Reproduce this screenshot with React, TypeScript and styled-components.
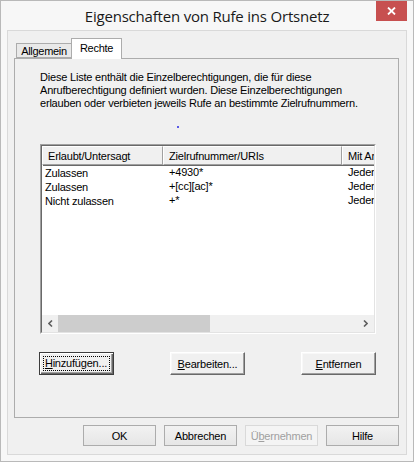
import styled, { createGlobalStyle } from "styled-components";

const GlobalStyle = createGlobalStyle`
  html, body {
    margin: 0;
    padding: 0;
    background: #ffffff;
  }
  * {
    box-sizing: border-box;
  }
`;

const dlgFont = `"Liberation Sans", Arial, sans-serif`;

const S = {
  Window: styled.div`
    width: 414px;
    height: 462px;
    display: flex;
    flex-direction: column;
    background: #f7f7f7;
    border: 1px solid #b9b9b9;
    font-family: ${dlgFont};
    font-size: 11px;
    letter-spacing: -0.2px;
    color: #000;
  `,
  TitleBar: styled.div`
    height: 29px;
    display: grid;
    grid-template-columns: 1fr auto 1fr;
    align-items: start;
  `,
  Title: styled.div`
    grid-column: 2;
    padding-top: 5px;
    font-family: "Open Sans", "Noto Sans", sans-serif;
    font-size: 15px;
    line-height: 20px;
    letter-spacing: -0.2px;
    color: #1a1a1a;
    white-space: nowrap;
  `,
  Close: styled.div`
    grid-column: 3;
    justify-self: end;
    width: 31px;
    height: 20px;
    margin-right: 6px;
    display: flex;
    align-items: center;
    justify-content: center;
    background: #c75050;
  `,
  Client: styled.div`
    height: 425px;
    margin: 0 6px;
    padding: 7px 7px 8px 6px;
    display: flex;
    flex-direction: column;
    background: #f0f0f0;
    border: 1px solid #d9d9d9;
  `,
  TabStrip: styled.div`
    height: 20px;
    padding-left: 2px;
    display: flex;
    align-items: flex-end;
  `,
  Tab: styled.div<{ $active?: boolean }>`
    position: relative;
    height: ${(p) => (p.$active ? "21px" : "15px")};
    width: ${(p) => (p.$active ? "51px" : "56px")};
    margin-left: ${(p) => (p.$active ? "-1px" : "0")};
    margin-bottom: ${(p) => (p.$active ? "-1px" : "0")};
    z-index: ${(p) => (p.$active ? 1 : 0)};
    display: flex;
    align-items: center;
    justify-content: center;
    padding-bottom: ${(p) => (p.$active ? "3px" : "0")};
    background: ${(p) => (p.$active ? "#ffffff" : "#e9e9e9")};
    border: 1px solid #acacac;
    border-bottom: ${(p) => (p.$active ? "none" : "1px solid #acacac")};
    font-size: 11px;
    letter-spacing: -0.3px;
  `,
  Panel: styled.div`
    height: 360px;
    padding: 12px 22px 0 25px;
    display: flex;
    flex-direction: column;
    background: #f0f0f0;
    border: 1px solid #acacac;
  `,
  Intro: styled.p`
    margin: 0;
    line-height: 13px;
  `,
  Dot: styled.div`
    width: 2px;
    height: 2px;
    margin: 16px 0 0 137px;
    background: #5a5ae6;
  `,
  ListView: styled.div`
    height: 190px;
    margin-top: 16px;
    display: flex;
    border-top: 1px solid #a0a0a0;
    border-left: 1px solid #a0a0a0;
    border-bottom: 1px solid #ffffff;
    border-right: 1px solid #ffffff;
  `,
  ListInner: styled.div`
    flex: 1;
    display: flex;
    flex-direction: column;
    overflow: hidden;
    background: #ffffff;
    border-top: 1px solid #696969;
    border-left: 1px solid #696969;
    border-bottom: 1px solid #e3e3e3;
    border-right: 1px solid #e3e3e3;
  `,
  Grid: styled.div`
    flex: 1;
    display: grid;
    grid-template-columns: 121px 179px 1fr;
    grid-auto-rows: 14px;
    grid-template-rows: 19px;
    align-content: start;
    overflow: hidden;
  `,
  HeaderCell: styled.div`
    display: flex;
    align-items: center;
    padding-left: 5px;
    background: #f0f0f0;
    border-top: 1px solid #ffffff;
    border-left: 1px solid #ffffff;
    border-right: 1px solid #a0a0a0;
    border-bottom: 1px solid #a0a0a0;
    box-shadow: 1px 1px 0 #696969;
    white-space: nowrap;
    overflow: hidden;
    &:nth-child(3) {
      border-right: none;
      box-shadow: 0 1px 0 #696969;
    }
  `,
  Cell: styled.div<{ $first?: boolean }>`
    display: flex;
    align-items: center;
    padding-left: ${(p) => (p.$first ? "3px" : "6px")};
    white-space: nowrap;
    overflow: hidden;
    &:nth-child(3n + 4) {
      margin-top: 1px;
    }
  `,
  ScrollBar: styled.div`
    height: 17px;
    display: flex;
    background: #f0f0f0;
  `,
  ScrollArrow: styled.div`
    width: 17px;
    display: flex;
    align-items: center;
    justify-content: center;
  `,
  Thumb: styled.div`
    width: 152px;
    margin: 0 0 0 -1px;
    background: #cdcdcd;
  `,
  Track: styled.div`
    flex: 1;
  `,
  ActionRow: styled.div`
    margin-top: 18px;
    display: flex;
    justify-content: space-between;
  `,
  ClassicButton: styled.div<{ $default?: boolean }>`
    width: 75px;
    height: 23px;
    display: flex;
    align-items: center;
    justify-content: center;
    background: #f0f0f0;
    border: 1px solid ${(p) => (p.$default ? "#3c3c3c" : "#ffffff")};
    border-right-color: ${(p) => (p.$default ? "#3c3c3c" : "#696969")};
    border-bottom-color: ${(p) => (p.$default ? "#3c3c3c" : "#696969")};
    box-shadow: ${(p) =>
      p.$default
        ? "inset 1px 1px #ffffff, inset -1px -1px #696969, inset -2px -2px #a0a0a0"
        : "inset -1px -1px #a0a0a0, inset 1px 1px #f8f8f8"};
    margin-left: ${(p) => (p.$default ? "-1px" : "0")};
    white-space: nowrap;
  `,
  Focus: styled.span`
    width: 67px;
    height: 15px;
    display: flex;
    align-items: center;
    justify-content: center;
    margin: 0 1px 1px 0;
    border: 1px dotted #000;
  `,
  DialogButtons: styled.div`
    margin-top: 7px;
    display: flex;
    justify-content: flex-end;
    gap: 8px;
  `,
  FlatButton: styled.div<{ $disabled?: boolean }>`
    width: 73px;
    height: 21px;
    display: flex;
    align-items: center;
    justify-content: center;
    background: ${(p) =>
      p.$disabled ? "#f4f4f4" : "linear-gradient(#f2f2f2, #e6e6e6)"};
    border: 1px solid ${(p) => (p.$disabled ? "#d9d9d9" : "#acacac")};
    color: ${(p) => (p.$disabled ? "#a0a0a0" : "#000")};
  `,
};

const columns = ["Erlaubt/Untersagt", "Zielrufnummer/URIs", "Mit Amt"];

const rows = [
  ["Zulassen", "+4930*", "Jeden"],
  ["Zulassen", "+[cc][ac]*", "Jeden"],
  ["Nicht zulassen", "+*", "Jeden"],
];

function Chevron({ dir }: { dir: "left" | "right" }) {
  return (
    <svg width="5" height="7" viewBox="0 0 5 7">
      <polyline
        points={dir === "left" ? "4,0.5 1,3.5 4,6.5" : "1,0.5 4,3.5 1,6.5"}
        fill="none"
        stroke="#5f5f5f"
        strokeWidth="1.6"
      />
    </svg>
  );
}

export default function App() {
  return (
    <>
      <GlobalStyle />
      <S.Window>
        <S.TitleBar>
          <S.Title>Eigenschaften von Rufe ins Ortsnetz</S.Title>
          <S.Close>
            <svg width="9" height="8" viewBox="0 0 9 8">
              <path d="M1 0.5 L8 7.5 M8 0.5 L1 7.5" stroke="#fff" strokeWidth="1.8" />
            </svg>
          </S.Close>
        </S.TitleBar>

        <S.Client>
          <S.TabStrip>
            <S.Tab>Allgemein</S.Tab>
            <S.Tab $active>Rechte</S.Tab>
          </S.TabStrip>

          <S.Panel>
            <S.Intro>
              Diese Liste enthält die Einzelberechtigungen, die für diese
              <br />
              Anrufberechtigung definiert wurden. Diese Einzelberechtigungen
              <br />
              erlauben oder verbieten jeweils Rufe an bestimmte Zielrufnummern.
            </S.Intro>
            <S.Dot />

            <S.ListView>
              <S.ListInner>
                <S.Grid>
                  {columns.map((c) => (
                    <S.HeaderCell key={c}>{c}</S.HeaderCell>
                  ))}
                  {rows.map((r, i) =>
                    r.map((v, j) => (
                      <S.Cell key={`${i}-${j}`} $first={j === 0}>
                        {v}
                      </S.Cell>
                    ))
                  )}
                </S.Grid>
                <S.ScrollBar>
                  <S.ScrollArrow>
                    <Chevron dir="left" />
                  </S.ScrollArrow>
                  <S.Thumb />
                  <S.Track />
                  <S.ScrollArrow>
                    <Chevron dir="right" />
                  </S.ScrollArrow>
                </S.ScrollBar>
              </S.ListInner>
            </S.ListView>

            <S.ActionRow>
              <S.ClassicButton $default>
                <S.Focus>
                  <span>
                    <u>H</u>inzufügen...
                  </span>
                </S.Focus>
              </S.ClassicButton>
              <S.ClassicButton>
                <span>
                  <u>B</u>earbeiten...
                </span>
              </S.ClassicButton>
              <S.ClassicButton>
                <span>
                  <u>E</u>ntfernen
                </span>
              </S.ClassicButton>
            </S.ActionRow>
          </S.Panel>

          <S.DialogButtons>
            <S.FlatButton>OK</S.FlatButton>
            <S.FlatButton>Abbrechen</S.FlatButton>
            <S.FlatButton $disabled>
              <span>
                Ü<u>b</u>ernehmen
              </span>
            </S.FlatButton>
            <S.FlatButton>Hilfe</S.FlatButton>
          </S.DialogButtons>
        </S.Client>
      </S.Window>
    </>
  );
}
